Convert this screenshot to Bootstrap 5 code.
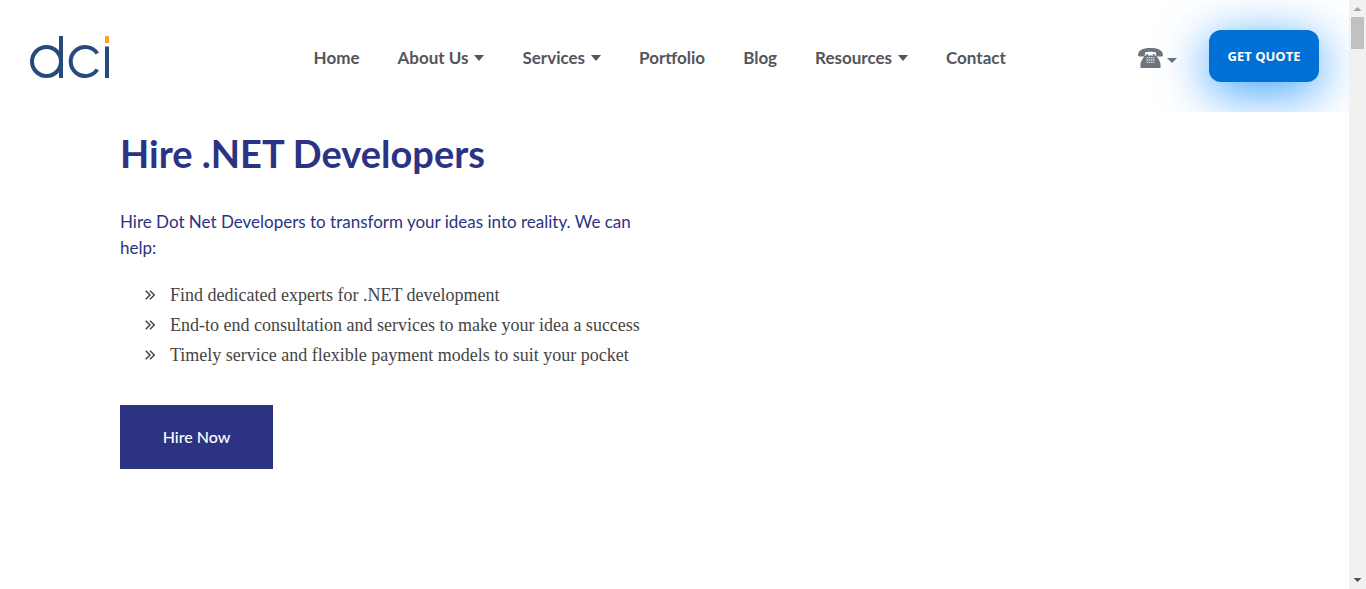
<!DOCTYPE html>
<html lang="en">
<head>
<meta charset="utf-8">
<meta name="viewport" content="width=device-width, initial-scale=1">
<title>Hire .NET Developers</title>
<link href="https://cdn.jsdelivr.net/npm/bootstrap@5.3.0/dist/css/bootstrap.min.css" rel="stylesheet">
<style>
  body { font-family: Lato, "Open Sans", sans-serif; color: #444; background: #fff; }
  .site-header { min-height: 112px; padding: 30px; overflow: hidden; }
  .brand-cell { flex: 0 0 22%; }
  .main-menu { gap: 38px; padding-top: 3px; }
  .main-menu .nav-link { padding: 0; font-size: 17px; font-weight: 700; line-height: 24px; color: #54555a; }
  .dropdown-toggle::after { border-top-width: 6px; border-left-width: 5px; border-right-width: 5px; margin-left: 6px; vertical-align: 3px; }
  .phone-toggle, .phone-toggle:hover { color: #6c757d; }
  .phone-toggle { padding: 4px 0 0; }
  .phone-toggle::after { border-top-width: 5px; margin-left: 4px; vertical-align: 0; margin-top: 5px; }
  .quote-btn { width: 110px; height: 52px; border-radius: 12px; background: #006fd6; color: #fff;
    font: 700 13px "Open Sans", sans-serif; box-shadow: 0 10px 50px rgba(0, 132, 255, .8); }
  .quote-btn:hover { background: #0062bd; color: #fff; }
  .hero { padding: 16px 30px 40px 120px; }
  .hero h1 { font-size: 38px; line-height: 50px; font-weight: 700; color: #2c3383; margin-bottom: 31px; }
  .hero-copy { max-width: 530px; font-size: 17px; line-height: 26px; color: #2c3383; margin-bottom: 19px; }
  .benefits { font: 18px/30px "Liberation Serif", serif; color: #444; margin-bottom: 35px; padding-left: 25px; }
  .benefits svg { flex: none; margin-right: 15px; }
  .hire-btn { width: 153px; height: 64px; border-radius: 0; background: #2c3383; color: #fff; font-size: 16px; font-weight: 500; }
  .hire-btn:hover { background: #232969; color: #fff; }
  .scroll-rail { flex: 0 0 17px; background: #f1f1f1; }
  .scroll-thumb { width: 13px; height: 32px; background: #c1c1c1; }
</style>
</head>
<body>
<div class="d-flex min-vh-100">
  <div class="flex-grow-1">
    <header class="site-header d-flex align-items-center">
      <div class="brand-cell">
        <a href="#" class="d-block" aria-label="dci">
          <svg class="d-block" width="80" height="44" viewBox="0 0 80 44" fill="none" stroke="#274a7c" stroke-width="4">
            <circle cx="16.500" cy="27.500" r="14.500"/>
            <line x1="31" y1="2" x2="31" y2="44"/>
            <path d="M67.300 19.500A14.500 14.500 0 1 0 67.300 35.500"/>
            <line x1="77" y1="12.500" x2="77" y2="44"/>
            <line x1="77" y1="2" x2="77" y2="9" stroke="#f9a035"/>
          </svg>
        </a>
      </div>
      <nav aria-label="Main">
        <ul class="nav main-menu flex-nowrap">
          <li class="nav-item"><a class="nav-link" href="#">Home</a></li>
          <li class="nav-item"><a class="nav-link dropdown-toggle" href="#">About Us</a></li>
          <li class="nav-item"><a class="nav-link dropdown-toggle" href="#">Services</a></li>
          <li class="nav-item"><a class="nav-link" href="#">Portfolio</a></li>
          <li class="nav-item"><a class="nav-link" href="#">Blog</a></li>
          <li class="nav-item"><a class="nav-link dropdown-toggle" href="#">Resources</a></li>
          <li class="nav-item"><a class="nav-link" href="#">Contact</a></li>
        </ul>
      </nav>
      <div class="d-flex align-items-center ms-auto">
        <button type="button" class="phone-toggle dropdown-toggle btn border-0 d-flex align-items-center me-4" aria-label="Phone numbers">
          <svg width="25" height="20" viewBox="0 0 25 20">
            <path fill="currentColor" d="M0 7.500C0 2.500 4 0 12.500 0S25 2.500 25 7.500L24 8.500H19.500L18 7V4.500C15 3.500 10 3.500 7 4.500V7L5.500 8.500H1Z"/>
            <path fill="currentColor" d="M8.500 6h1.500v1.500h5V6h1.500v1.500h2C20 11 22.500 13 22.500 17v3h-20v-3C2.500 13 5 11 6.500 7.500h2Z"/>
            <path stroke="#fff" stroke-width="1.300" stroke-dasharray="1.500 .7" opacity=".75" d="M8.600 9.700H16.500M8.600 12H16.500M8.600 14.300H16.500"/>
          </svg>
        </button>
        <button type="button" class="quote-btn btn border-0 p-0 ms-2">GET QUOTE</button>
      </div>
    </header>
    <main class="hero">
      <h1>Hire .NET Developers</h1>
      <p class="hero-copy">Hire Dot Net Developers to transform your ideas into reality. We can help:</p>
      <ul class="benefits list-unstyled">
        <li class="d-flex align-items-center"><svg width="10" height="10" viewBox="0 0 10 10" fill="none" stroke="#444" stroke-width="1.500"><path d="M.7.700 5 5 .7 9.300M5 .7 9.300 5 5 9.300"/></svg>Find dedicated experts for .NET development</li>
        <li class="d-flex align-items-center"><svg width="10" height="10" viewBox="0 0 10 10" fill="none" stroke="#444" stroke-width="1.500"><path d="M.7.700 5 5 .7 9.300M5 .7 9.300 5 5 9.300"/></svg>End-to end consultation and services to make your idea a success</li>
        <li class="d-flex align-items-center"><svg width="10" height="10" viewBox="0 0 10 10" fill="none" stroke="#444" stroke-width="1.500"><path d="M.7.700 5 5 .7 9.300M5 .7 9.300 5 5 9.300"/></svg>Timely service and flexible payment models to suit your pocket</li>
      </ul>
      <button type="button" class="hire-btn btn border-0 p-0">Hire Now</button>
    </main>
  </div>
  <div class="scroll-rail" aria-hidden="true">
    <div class="sticky-top vh-100 d-flex flex-column align-items-center">
      <svg width="17" height="17" viewBox="0 0 17 17"><path d="M4.500 11h8l-4-4z" fill="#a3a3a3"/></svg>
      <div class="scroll-thumb"></div>
      <svg class="mt-auto" width="17" height="17" viewBox="0 0 17 17"><path d="M4.500 6h8l-4 4z" fill="#505050"/></svg>
    </div>
  </div>
</div>
<script src="https://cdn.jsdelivr.net/npm/bootstrap@5.3.0/dist/js/bootstrap.bundle.min.js"></script>
</body>
</html>
